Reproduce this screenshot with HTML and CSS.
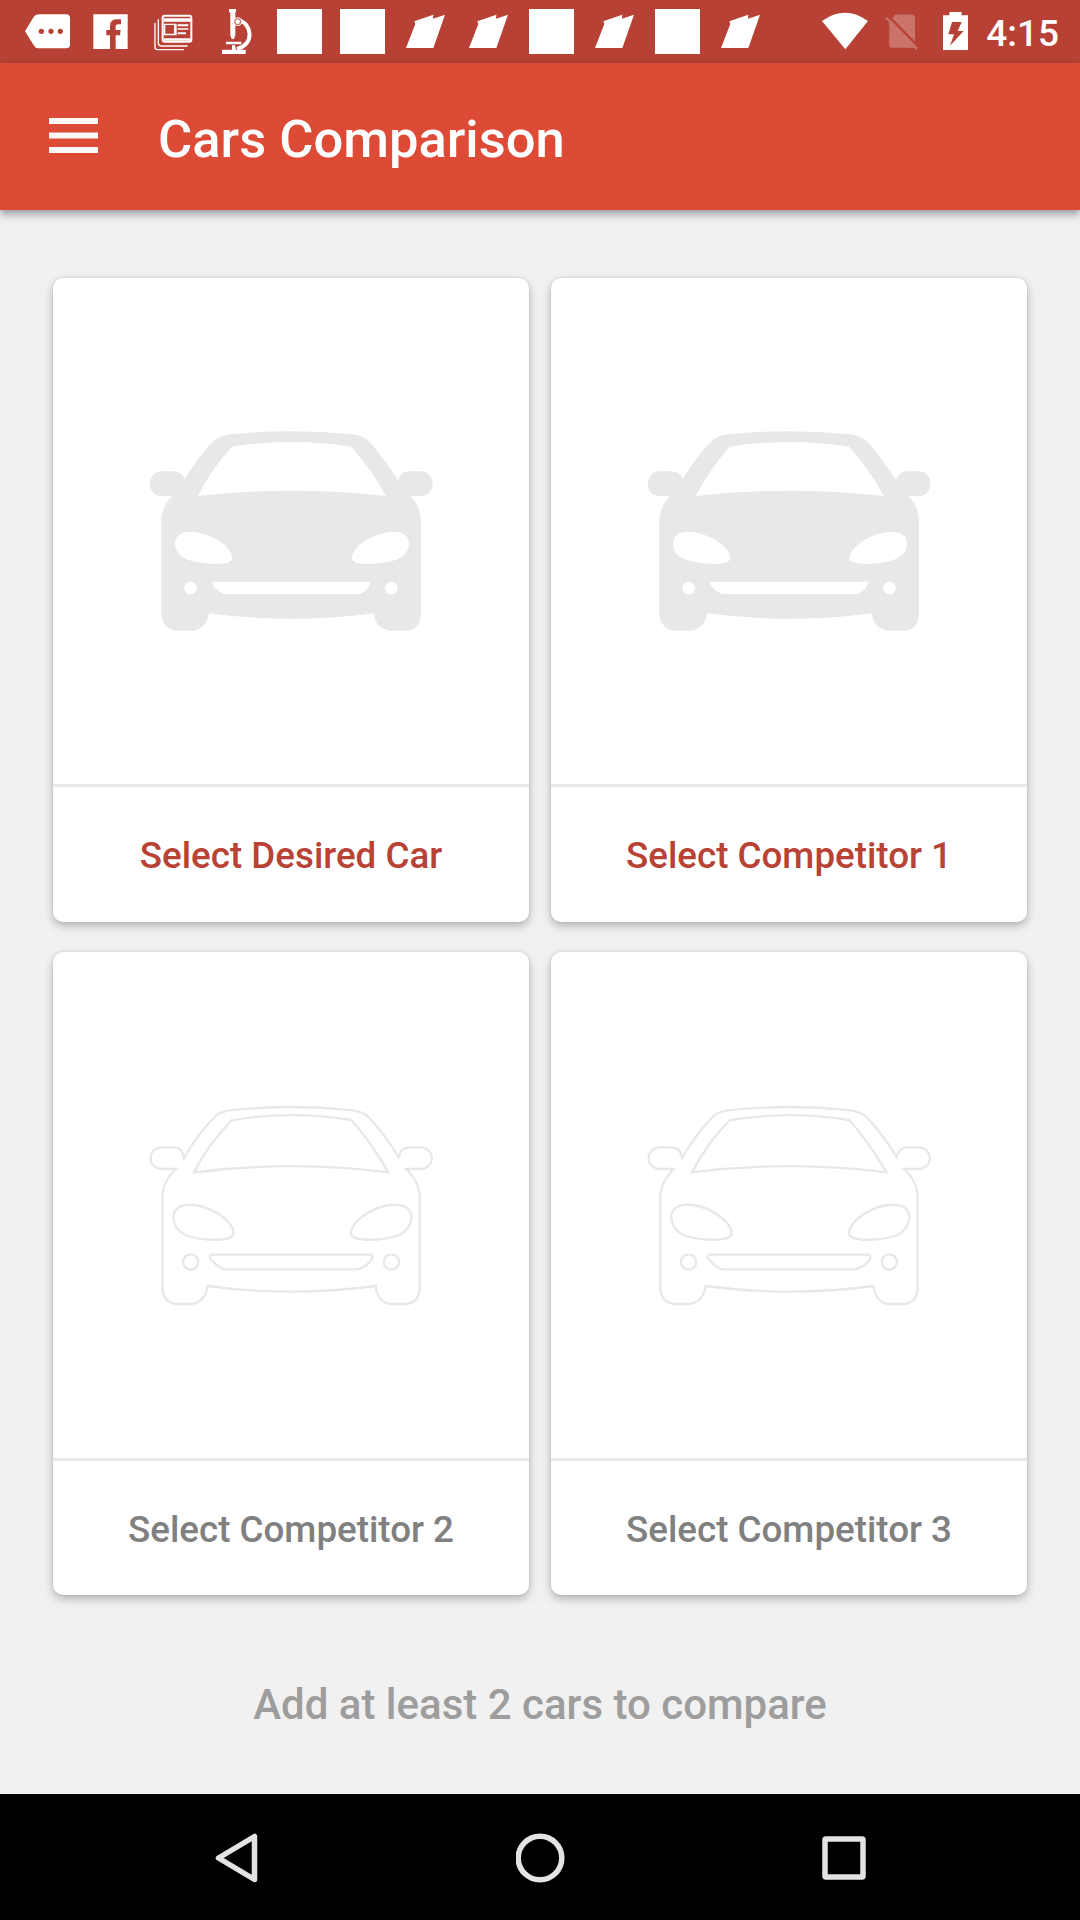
FILE: index.html
```html
<!DOCTYPE html>
<html lang="en">
<head>
<meta charset="utf-8">
<title>Cars Comparison</title>
<link rel="stylesheet" href="styles.css">
</head>
<body>
<svg class="defs" aria-hidden="true">
  <symbol id="flag" viewBox="0 0 135 135"><path fill="#fff" d="M9 117 L37 45 L34 37 L91 17 L90 29 L126 17 L91 117Z"/></symbol>
  <symbol id="square" viewBox="0 0 135 135"><path fill="#fff" d="M0 0H135V135H0Z"/></symbol>
  <symbol id="car-solid" viewBox="0 0 966 720">
    <path fill="#e8e8e8" fill-rule="evenodd" d="M164 207 Q205 139 251 93 Q270 77 300 73 Q480 54 668 73 Q697 76 719 96 Q762 145 804 210 Q814 185 836 184 H874 C920 187 918 257 874 258 H841 Q872 289 873 331 V614 Q869 658 832 662 H778 Q735 655 732 610 Q484 643 237 610 Q231 652 193 662 H142 Q99 658 94 614 V327 Q97 288 126 258 H94 C48 256 49 187 94 184 H128 Q157 184 164 207Z
    M203 258 Q484 226 768 258 Q721 173 663 110 Q482 82 305 110 Q247 174 203 258Z
    M135 401 C137 354 201 356 263 390 Q310 420 306 448 C298 470 211 463 170 448 Q135 432 135 401Z
    M837 401 C835 354 771 356 709 390 Q662 420 666 448 C674 470 761 463 802 448 Q837 432 837 401Z
    M244 515 H722 Q716 540 689 552 H282 Q253 540 244 515Z
    M163 534a19 19 0 1 0 38 0a19 19 0 1 0-38 0Z M765 534a19 19 0 1 0 38 0a19 19 0 1 0-38 0Z"/>
  </symbol>
  <symbol id="car-outline" viewBox="0 0 966 720">
    <g fill="none" stroke="#e8e8e8" stroke-width="7">
      <path d="M162 219 Q205 145 254 96 Q269 80 299 76 Q484 56 670 76 Q698 80 715 96 Q761 143 806 216 Q811 187 838 187 H874 C916 190 916 249 874 252 H828 Q867 289 869 329 V613 Q865 652 830 657 H780 Q742 650 737 603 Q484 637 232 603 Q228 649 184 657 H138 Q101 652 97 613 V327 Q100 289 138 252 H94 C51 249 51 190 94 187 H130 Q158 187 162 219Z"/>
      <path d="M192 262 Q484 225 775 262 Q721 168 664 105 Q482 75 305 106 Q237 174 192 262Z"/>
      <path d="M130 400 C128 350 198 348 261 384 Q312 416 311 447 C302 472 212 467 166 450 Q133 433 130 400Z"/>
      <path d="M844 400 C846 350 776 348 713 384 Q662 416 663 447 C672 472 762 467 808 450 Q841 433 844 400Z"/>
      <path d="M245 509 H722 Q732 513 724 526 Q705 549 681 553 H283 Q270 552 243 524 Q235 513 245 509Z"/>
      <circle cx="182" cy="531" r="23"/><circle cx="784" cy="531" r="23"/>
    </g>
  </symbol>
</svg>
<div class="screen">
  <div class="status">
    <div class="notifications">
      <svg class="icon" viewBox="0 0 135 135"><path fill="#fff" fill-rule="evenodd" d="M0 67 L26 24 Q31 16 40 16 H124 Q135 17 135 28 V108 Q134 118 124 118 H40 Q32 118 27 110Z M41 67a8 8 0 1 0 16 0a8 8 0 1 0-16 0Z M70 67a8 8 0 1 0 16 0a8 8 0 1 0-16 0Z M98 67a8 8 0 1 0 16 0a8 8 0 1 0-16 0Z"/></svg>
      <svg class="icon" viewBox="0 0 135 135"><path fill="#fff" fill-rule="evenodd" d="M16 16H119V120H83V79H96L98 63H83V53Q83 46 91 46H99V31H86Q66 31 66 51V63H55V79H66V120H16Z"/></svg>
      <svg class="icon" viewBox="0 0 135 135"><g fill="none" stroke="#fff" stroke-width="4"><path d="M12 42V115Q12 122 20 122H99M22 31V103Q22 111 31 111H110"/><rect x="35" y="20" width="86" height="78" rx="6" stroke-width="6"/></g><path fill="#fff" fill-rule="evenodd" d="M38 28H119V38H38Z M38 44H77V79H38Z M43 48V74H69V48Z M80 46H112V52H80Z M80 58H112V62H80Z M80 70H105V76H80Z M38 88H119V95H38Z"/></svg>
      <svg class="icon" viewBox="0 0 135 135"><g fill="#fff"><path d="M45 0H66V10H64V79L60 90H53L49 79V10H45Z M36 98H82V106H36Z M24 122H54V109H63L66 122H95V135H24Z"/><circle cx="71" cy="38" r="13"/></g><path fill="none" stroke="#fff" stroke-width="12" d="M77 35C113 45 123 105 69 120"/><circle cx="71" cy="38" r="9" fill="#fff" stroke="#b74134" stroke-width="3"/></svg>
      <svg class="icon"><use href="#square"/></svg>
      <svg class="icon"><use href="#square"/></svg>
      <svg class="icon"><use href="#flag"/></svg>
      <svg class="icon"><use href="#flag"/></svg>
      <svg class="icon"><use href="#square"/></svg>
      <svg class="icon"><use href="#flag"/></svg>
      <svg class="icon"><use href="#square"/></svg>
      <svg class="icon"><use href="#flag"/></svg>
    </div>
    <div class="system">
      <svg class="wifi" viewBox="0 0 138 120"><path fill="#fff" d="M0 27Q69 -23 138 27L70 112Z"/></svg>
      <svg class="sim" viewBox="0 0 100 120"><path fill="#cc7369" d="M31 7H81Q90 7 91 16V108H22Q13 108 13 99V29Z"/><path stroke="#b74134" stroke-width="7" d="M12 13L102 105"/><path stroke="#cc7369" stroke-width="7" d="M3 16L97 112"/></svg>
      <svg class="battery" viewBox="0 0 75 120"><path fill="#fff" fill-rule="evenodd" d="M19 0H56V10H75V114H0V10H19Z M27 30L16 67H33L21 101L62 57H44L56 30Z"/></svg>
      <span class="clock">4:15</span>
    </div>
  </div>
  <header class="appbar">
    <svg class="menu" viewBox="0 0 49 36"><path fill="#fff" fill-opacity=".96" d="M0 0H49V6H0Z M0 14.5H49V20.5H0Z M0 29H49V35H0Z"/></svg>
    <h1 class="title">Cars Comparison</h1>
  </header>
  <main class="content">
    <div class="grid">
      <section class="card"><div class="picture"><svg class="car"><use href="#car-solid"/></svg></div><div class="label active">Select Desired Car</div></section>
      <section class="card"><div class="picture"><svg class="car"><use href="#car-solid"/></svg></div><div class="label active">Select Competitor 1</div></section>
      <section class="card low"><div class="picture"><svg class="car"><use href="#car-outline"/></svg></div><div class="label">Select Competitor 2</div></section>
      <section class="card low"><div class="picture"><svg class="car"><use href="#car-outline"/></svg></div><div class="label">Select Competitor 3</div></section>
    </div>
    <p class="hint">Add at least 2 cars to compare</p>
  </main>
  <nav class="navbar">
    <svg class="nav-icon" viewBox="0 0 50 50"><path d="M42.5 3.5V46.5L6.5 25Z"/></svg>
    <svg class="nav-icon" viewBox="0 0 50 50"><circle cx="24" cy="25" r="21.8"/></svg>
    <svg class="nav-icon" viewBox="0 0 50 50"><rect x="6" y="6" width="38" height="38" rx="1"/></svg>
  </nav>
</div>
</body>
</html>
```
FILE: styles.css
```css
* { box-sizing: border-box; }
body { margin: 0; font-family: Roboto, sans-serif; font-weight: 500; }
.defs { display: none; }
svg { display: block; flex: none; }
.screen { width: 1080px; height: 1920px; display: flex; flex-direction: column; background: #f1f1f1; overflow: hidden; }

.status { height: 63px; flex: none; background: #b74134; display: flex; justify-content: space-between; padding: 0 21px 0 25px; }
.notifications { display: flex; gap: 18px; padding-top: 9px; }
.icon { width: 45px; height: 45px; }
.system { display: flex; align-items: flex-start; padding-top: 12px; }
.wifi { width: 46px; height: 40px; margin-right: 17px; }
.sim { width: 33px; height: 40px; margin: 0 25px 0 0; }
.battery { width: 25px; height: 40px; margin-right: 18px; }
.clock { color: #fff; font-size: 37px; line-height: 44px; }

.appbar { height: 147px; flex: none; background: #dd4b36; display: flex; align-items: center; padding: 0 49px; gap: 60px; box-shadow: 0 4px 8px rgba(40, 40, 60, .45); }
.menu { width: 49px; height: 36px; margin-bottom: 1px; }
.title { margin: 5px 0 0; color: #fff; font-size: 52.5px; font-weight: 500; line-height: 62px; white-space: nowrap; }

.content { flex: 1; padding: 68px 53px 0; }
.grid { display: grid; grid-template-columns: 476px 476px; column-gap: 22px; row-gap: 30px; }
.card { background: #fff; border-radius: 10px; box-shadow: 0 4px 10px rgba(0, 0, 0, .25), 0 0 3px rgba(0, 0, 0, .1); }
.picture { height: 509px; border-bottom: 3px solid #e9e9e9; display: flex; align-items: center; justify-content: center; padding-bottom: 2px; }
.car { width: 322px; height: 240px; }
.label { height: 135px; padding-top: 2px; display: flex; align-items: center; justify-content: center; font-size: 36.75px; color: #808080; white-space: nowrap; }
.low .label { height: 134px; }
.low .picture { padding-bottom: 0; }
.label.active { color: #b84335; }
.hint { margin: 85px 0 0; text-align: center; font-size: 42px; line-height: 50px; color: #9d9d9d; }

.navbar { height: 126px; flex: none; background: #000; display: flex; justify-content: space-between; align-items: center; padding: 1px 211px 0 212px; }
.nav-icon { width: 50px; height: 50px; fill: none; stroke: #e3e3e3; stroke-width: 5.5; stroke-linejoin: round; }
```
